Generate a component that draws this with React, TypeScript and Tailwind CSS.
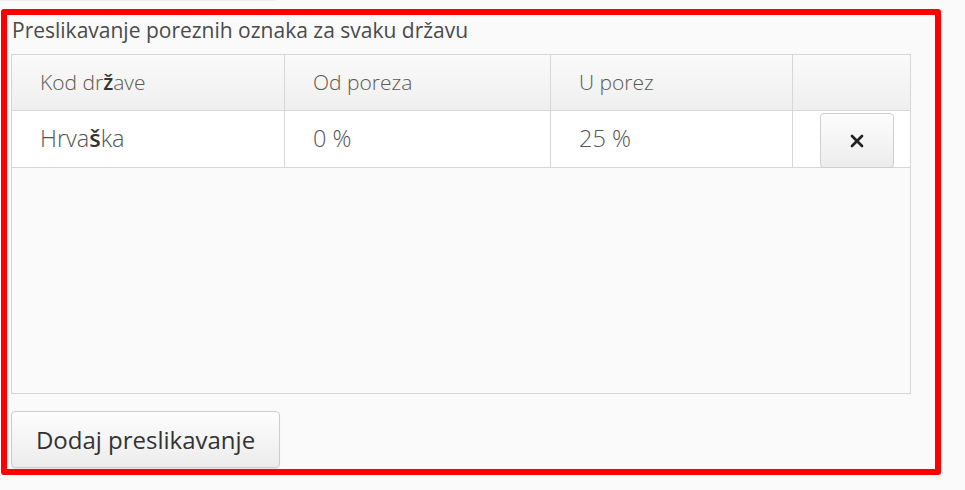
import { X } from 'lucide-react';

const font = { fontFamily: '"Open Sans", "Liberation Sans", sans-serif' };

export default function App() {
  const cols = ['w-[273px]', 'w-[266px]', 'w-[242px]', 'flex-1'];

  return (
    <div className="min-h-[490px] w-[965px] bg-[#fafafa]" style={font}>
      {/* bottom edge of the control above */}
      <div className="h-[9px]">
        <div className="h-px w-[276px] bg-[#efefef]" />
      </div>

      <div className="ml-px flex h-[466px] w-[940px] flex-col rounded-[3px] border-[6px] border-[#ff0000] px-[4px]">
        <div className="flex h-[39px] shrink-0 items-center pb-[7px] pl-[1px] text-[21px] text-[#4a4a4a]">
          Preslikavanje poreznih oznaka za svaku državu
        </div>

        <div className="flex h-[340px] w-[900px] shrink-0 flex-col border border-[#d6d6d6] bg-[#fafafa]">
          {/* header */}
          <div className="flex h-[56px] border-b border-[#d6d6d6] bg-gradient-to-b from-[#fafafa] to-[#efefef] text-[21px] font-light text-[#5e5850]">
            <div className={`${cols[0]} flex items-center border-r border-[#d6d6d6] pl-[28px]`}>
              Kod dr<span className="font-semibold text-[#333]">ž</span>ave
            </div>
            <div className={`${cols[1]} flex items-center border-r border-[#d6d6d6] pl-[28px]`}>Od poreza</div>
            <div className={`${cols[2]} flex items-center border-r border-[#d6d6d6] pl-[28px]`}>U porez</div>
            <div className={cols[3]} />
          </div>

          {/* row */}
          <div className="flex h-[57px] border-b border-[#d6d6d6] bg-white text-[23.5px] font-light text-[#555]">
            <div className={`${cols[0]} flex items-center border-r border-[#d6d6d6] pl-[28px]`}>
              Hrva<span className="font-semibold text-[#333]">š</span>ka
            </div>
            <div className={`${cols[1]} flex items-center border-r border-[#d6d6d6] pl-[28px]`}>0 %</div>
            <div className={`${cols[2]} flex items-center border-r border-[#d6d6d6] pl-[28px]`}>25 %</div>
            <div className={`${cols[3]} flex items-start pl-[27px] pt-[2px]`}>
              <button className="flex h-[55px] w-[74px] items-center justify-center rounded-[4px] border border-[#cfcfcf] bg-gradient-to-b from-[#fdfdfd] to-[#ececec] text-[#222]">
                <X className="h-[20px] w-[20px]" strokeWidth={3.2} />
              </button>
            </div>
          </div>
        </div>

        <div className="mt-[17px] shrink-0">
          <button className="h-[57px] w-[269px] rounded-[4px] border border-[#cdcdcd] bg-gradient-to-b from-[#fdfdfd] to-[#ececec] text-[24px] text-[#333] shadow-[0_1px_1px_rgba(0,0,0,0.08)]">
            Dodaj preslikavanje
          </button>
        </div>
      </div>
    </div>
  );
}
